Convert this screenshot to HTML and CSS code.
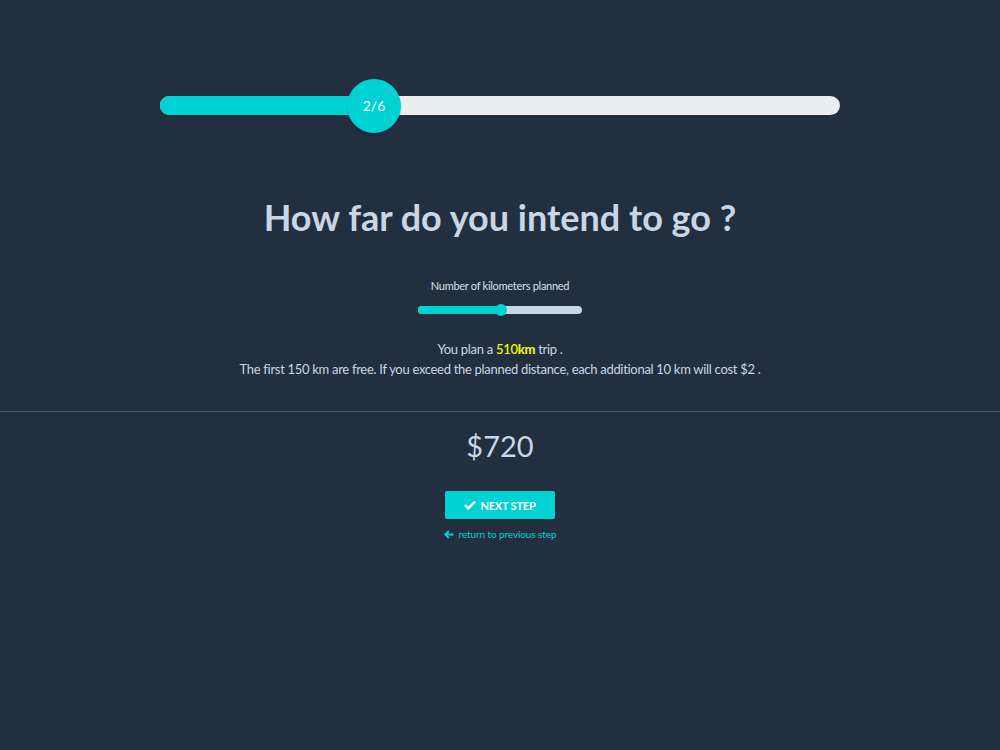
FILE: index.html
```html
<!DOCTYPE html>
<html lang="en">
<head>
    <meta charset="UTF-8">
    <meta name="viewport" content="width=device-width, initial-scale=1.0">
    <title>Trip distance</title>
    <link rel="stylesheet" href="styles.css">
</head>
<body>
    <div class="wizard">
        <div class="progress">
            <div class="progress-fill" style="width: 214px;"></div>
            <div class="progress-step" style="left: 187px;">2/6</div>
        </div>

        <h1 class="question">How far do you intend to go ?</h1>

        <div class="field">
            <div class="field-label">Number of kilometers planned</div>
            <div class="range">
                <div class="range-fill" style="width: 83px;"></div>
                <div class="range-thumb" style="left: 77px;"></div>
            </div>
        </div>

        <div class="summary">
            <p>You plan a <span class="distance">510<b>km</b></span> trip .</p>
            <p>The first 150 km are free. If you exceed the planned distance, each additional 10 km will cost $2 .</p>
        </div>
    </div>

    <hr class="divider">

    <div class="footer">
        <div class="price">$720</div>
        <button class="next-btn">
            <svg width="12" height="10" viewBox="0 0 12 10"><path d="M1 5.2 L4.3 8.4 L11 1.6" fill="none" stroke="#fff" stroke-width="2.4"/></svg>
            NEXT STEP
        </button>
        <a class="back-link" href="#">
            <svg width="10" height="9" viewBox="0 0 10 9"><path d="M9.5 4.5 H1.8 M4.8 1 L1.3 4.5 L4.8 8" fill="none" stroke="#00d2d3" stroke-width="1.8"/></svg>
            return to previous step
        </a>
    </div>
</body>
</html>
```

FILE: styles.css
```css
body {
    margin: 0;
    background-color: #222f3e;
    font-family: Lato, "Open Sans", sans-serif;
    color: #c8d6e5;
}
.wizard {
    width: 680px;
    margin: 0 auto;
    padding-top: 96px;
    text-align: center;
}
.progress {
    position: relative;
    height: 19px;
    background: #ecedef;
    border-radius: 10px;
}
.progress-fill {
    height: 100%;
    background: #00d2d3;
    border-radius: 10px;
}
.progress-step {
    position: absolute;
    top: -17px;
    width: 54px;
    height: 54px;
    border-radius: 50%;
    background: #00d2d3;
    box-shadow: 0 2px 2px rgba(0, 0, 0, 0.18);
    color: #fff;
    font-size: 14px;
    font-weight: 400;
    line-height: 54px;
}
.question {
    margin: 80px 0 0;
    font-size: 36px;
    font-weight: 700;
    line-height: 44px;
}
.field {
    margin-top: 40px;
    display: flex;
    flex-direction: column;
    align-items: center;
}
.field-label {
    font-size: 11px;
    line-height: 14px;
    letter-spacing: -0.28px;
    color: #d6e0eb;
}
.range {
    position: relative;
    margin-top: 13px;
    width: 164px;
    height: 8px;
    border-radius: 4px;
    background: #c8d6e5;
}
.range-fill {
    height: 100%;
    border-radius: 4px;
    background: #00d2d3;
}
.range-thumb {
    position: absolute;
    top: -2px;
    width: 12px;
    height: 12px;
    border-radius: 50%;
    background: #00d2d3;
}
.summary {
    margin-top: 25px;
    font-size: 13px;
    line-height: 20px;
    letter-spacing: -0.3px;
}
.summary p {
    margin: 0;
}
.distance {
    color: #f0f00a;
    font-weight: 600;
}
.divider {
    margin: 32px 0 0;
    border: 0;
    border-top: 1px solid #4a596b;
}
.footer {
    display: flex;
    flex-direction: column;
    align-items: center;
    padding-top: 14px;
}
.price {
    font-size: 29px;
    line-height: 40px;
}
.next-btn {
    margin-top: 25px;
    width: 110px;
    height: 28px;
    border: none;
    border-radius: 2px;
    background: #00d2d3;
    color: #fff;
    font-family: Lato, sans-serif;
    font-size: 11px;
    font-weight: 700;
    letter-spacing: -0.2px;
    display: flex;
    align-items: center;
    justify-content: center;
    gap: 4px;
    cursor: pointer;
}
.back-link {
    margin-top: 9px;
    color: #00d2d3;
    font-size: 10px;
    letter-spacing: -0.1px;
    text-decoration: none;
    display: flex;
    align-items: center;
    gap: 5px;
}
```
